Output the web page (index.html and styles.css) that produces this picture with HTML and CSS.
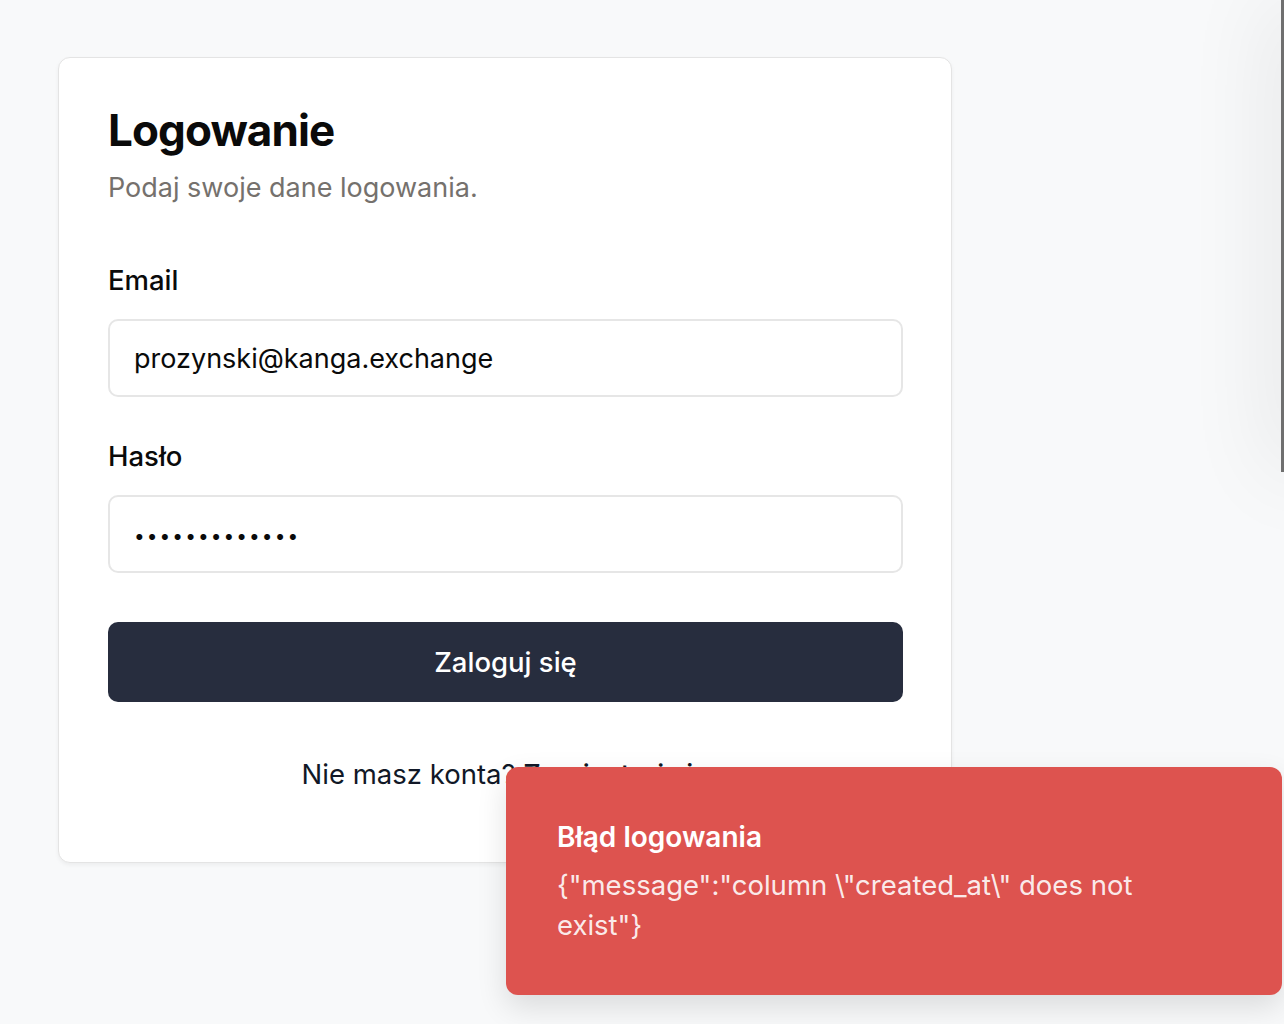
FILE: index.html
```html
<!DOCTYPE html>
<html lang="pl">
<head>
<meta charset="utf-8">
<title>Logowanie</title>
<link rel="stylesheet" href="styles.css">
</head>
<body>
<main class="page">
  <section class="card">
    <header class="card-header">
      <h1 class="title">Logowanie</h1>
      <p class="subtitle">Podaj swoje dane logowania.</p>
    </header>
    <form class="form">
      <div class="field">
        <label class="label" for="email">Email</label>
        <input class="input" id="email" type="email" value="prozynski@kanga.exchange">
      </div>
      <div class="field">
        <label class="label" for="password">Hasło</label>
        <input class="input input-password" id="password" type="password" value="sekretnehaslo">
      </div>
      <button class="button" type="button">Zaloguj się</button>
    </form>
    <p class="footer">Nie masz konta? <a class="link" href="#">Zarejestruj się</a></p>
  </section>
</main>
<aside class="side-panel"></aside>
<div class="toast" role="alert">
  <div class="toast-title">Błąd logowania</div>
  <div class="toast-message">{"message":"column \"created_at\" does not exist"}</div>
</div>
</body>
</html>
```
FILE: styles.css
```css
* { box-sizing: border-box; }
html, body { margin: 0; padding: 0; }
body {
  background: #f8f9fa;
  font-family: Inter, "Noto Sans", "Liberation Sans", sans-serif;
  color: #0a0a0a;
  width: 1284px;
  height: 1024px;
  overflow: hidden;
  position: relative;
}
.page {
  padding: 57px 0 0 58px;
}
.card {
  width: 894px;
  background: #ffffff;
  border: 1px solid #e4e4e4;
  border-radius: 12px;
  box-shadow: 0 2px 4px rgba(0,0,0,0.05);
  padding: 48px 48px 70px 49px;
}
.card-header {
  display: flex;
  flex-direction: column;
  gap: 16px;
}
.title {
  margin: 0;
  font-size: 44px;
  line-height: 48px;
  font-weight: 700;
  letter-spacing: -0.9px;
  color: #0a0a0a;
}
.subtitle {
  margin: 0;
  font-size: 27px;
  line-height: 36px;
  color: #75716d;
}
.form {
  margin-top: 56px;
  display: flex;
  flex-direction: column;
}
.field {
  display: flex;
  flex-direction: column;
  gap: 21px;
  margin-bottom: 41px;
}
.field + .field { margin-bottom: 49px; }
.label {
  font-size: 27.5px;
  line-height: 36px;
  font-weight: 500;
  color: #0a0a0a;
}
.input {
  height: 78px;
  width: 100%;
  border: 2px solid #e6e6e6;
  border-radius: 10px;
  padding: 0 24px;
  font-family: inherit;
  font-size: 27px;
  color: #0a0a0a;
  background: #ffffff;
  outline: none;
}
.input-password {
  letter-spacing: 2.1px;
  font-size: 19px;
  padding-top: 4px;
}
.button {
  height: 80px;
  width: 100%;
  border: none;
  border-radius: 10px;
  background: #272d3e;
  color: #ffffff;
  font-family: inherit;
  font-size: 27.5px;
  font-weight: 500;
}
.footer {
  margin: 54px 0 0;
  text-align: center;
  font-size: 27.5px;
  line-height: 36px;
  color: #111827;
}
.link {
  color: #111827;
  font-weight: 500;
  text-decoration: none;
}
.side-panel {
  position: absolute;
  left: 1281px;
  top: 0;
  width: 40px;
  height: 472px;
  background: #6f6f6f;
  box-shadow: 0 0 90px rgba(0,0,0,0.12);
}
.toast {
  position: absolute;
  left: 506px;
  top: 767px;
  width: 776px;
  height: 228px;
  background: #dd534f;
  border-radius: 12px;
  box-shadow: 0 12px 30px rgba(0,0,0,0.12);
  padding: 52px 50px 0 51px;
  color: #ffffff;
}
.toast-title {
  font-size: 28px;
  line-height: 36px;
  font-weight: 600;
}
.toast-message {
  margin-top: 10px;
  font-size: 27.5px;
  line-height: 40px;
  color: rgba(255,255,255,0.9);
  width: 600px;
}
```
